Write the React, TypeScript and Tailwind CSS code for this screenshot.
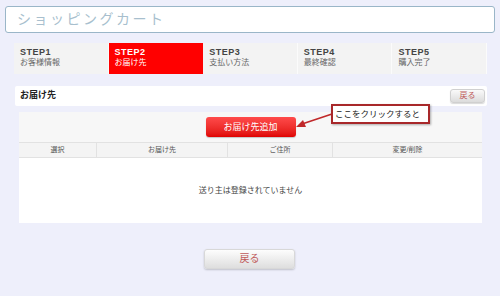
import React from "react";

const steps = [
  { label: "STEP1", sub: "お客様情報" },
  { label: "STEP2", sub: "お届け先", active: true },
  { label: "STEP3", sub: "支払い方法" },
  { label: "STEP4", sub: "最終確認" },
  { label: "STEP5", sub: "購入完了" },
];

const font = { fontFamily: '"Liberation Sans", "Noto Sans CJK JP", sans-serif' };

const App: React.FC = () => {
  return (
    <div className="relative w-[500px] h-[296px] bg-[#eeeffb] overflow-hidden" style={font}>
      {/* Title */}
      <div className="pt-[6px] px-[5px]">
        <div className="h-[27px] bg-white border border-[#9ab6c8] rounded-[3px] flex items-center pl-[11px] text-[14px] tracking-[2.5px] text-[#a8bfce]">
          ショッピングカート
        </div>
      </div>

      {/* Steps */}
      <div className="mt-[10px] ml-[14px] mr-[13px] grid grid-cols-5 h-[31px]">
        {steps.map((s) => (
          <div
            key={s.label}
            className={
              s.active
                ? "bg-[#ff0000] text-white pl-[6px] pt-[5px] leading-none"
                : "bg-[#f3f3f3] border-r border-[#fbfbfb] text-[#444] pl-[6px] pt-[5px] leading-none"
            }
          >
            <div className="text-[9px] font-bold tracking-[0.5px]">{s.label}</div>
            <div className={s.active ? "text-[8px] mt-[2px]" : "text-[8px] mt-[2px] text-[#666]"}>{s.sub}</div>
          </div>
        ))}
      </div>

      {/* Section header */}
      <div className="mt-[12px] ml-[15px] mr-[13px] h-[20px] bg-white rounded-[2px] flex items-center justify-between pl-[5px] pr-[2px]">
        <span className="text-[9px] font-bold text-[#222]">お届け先</span>
        <button className="w-[35px] h-[14px] rounded-[3px] bg-gradient-to-b from-[#fafafa] to-[#dcdcdc] border border-[#d0d0d0] shadow-[0_1px_1px_rgba(0,0,0,0.15)] text-[8px] text-[#c05a5a] leading-none">
          戻る
        </button>
      </div>

      {/* Panel */}
      <div className="mt-[6px] ml-[19px] mr-[18px] h-[111px] flex flex-col">
        <div className="h-[30px] bg-[#f7f7f7] flex justify-center pt-[5px]">
          <button className="w-[90px] h-[20px] rounded-[3px] bg-gradient-to-b from-[#ff4a4a] to-[#e00000] text-white text-[9px] leading-none shadow-[0_1px_1px_rgba(0,0,0,0.2)]">
            お届け先追加
          </button>
        </div>
        <div className="grid grid-cols-[78px_131px_105px_1fr] h-[16px] bg-[#f4f4f4] border-y border-[#e2e2e2] text-[7px] text-[#555]">
          <div className="flex items-center justify-center border-r border-[#e2e2e2]">選択</div>
          <div className="flex items-center justify-center border-r border-[#e2e2e2]">お届け先</div>
          <div className="flex items-center justify-center border-r border-[#e2e2e2]">ご住所</div>
          <div className="flex items-center justify-center">変更/削除</div>
        </div>
        <div className="flex-1 bg-white flex items-center justify-center text-[8px] text-[#444]">
          送り主は登録されていません
        </div>
      </div>

      {/* Bottom back button */}
      <div className="mt-[26px] flex justify-center pr-[1px]">
        <button className="w-[91px] h-[20px] rounded-[3px] bg-gradient-to-b from-[#fdfdfd] to-[#dedede] border border-[#d8d8d8] shadow-[0_1px_2px_rgba(0,0,0,0.2)] text-[10px] text-[#c05a5a] leading-none">
          戻る
        </button>
      </div>

      {/* Callout annotation */}
      <svg className="absolute left-[290px] top-[108px]" width="50" height="24" viewBox="0 0 50 24">
        <line x1="42" y1="6" x2="12" y2="16" stroke="#c0282a" strokeWidth="1.5" />
        <polygon points="6,19 13,12 16,19" fill="#c0282a" />
      </svg>
      <div className="absolute left-[331px] top-[104px] w-[99px] h-[20px] bg-white border-2 border-[#a8282a] shadow-[1px_1px_2px_rgba(0,0,0,0.3)] flex items-center pl-[2px] text-[8.5px] text-[#222] leading-none">
        ここをクリックすると
      </div>
    </div>
  );
};

export default App;
